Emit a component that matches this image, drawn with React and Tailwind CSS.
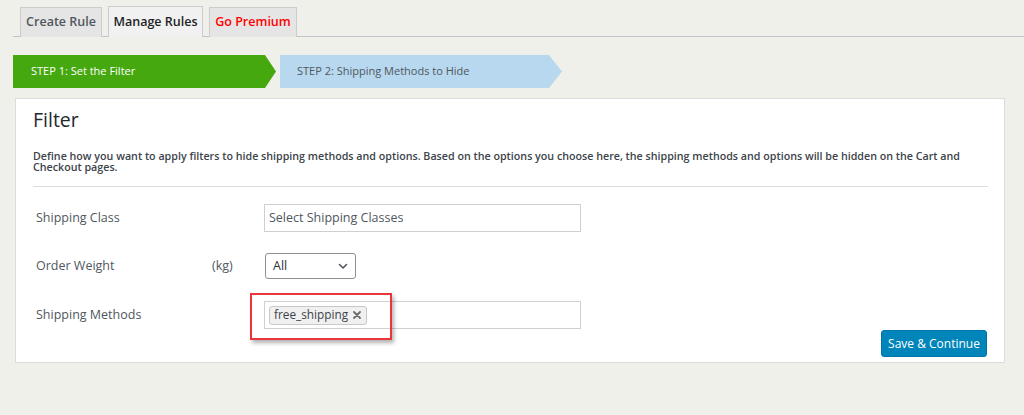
import React from "react";

function Chevron() {
  return (
    <svg width="12" height="12" viewBox="0 0 12 12" fill="none">
      <path d="M2.5 4.5L6 8L9.5 4.5" stroke="#50575e" strokeWidth="1.6" strokeLinecap="round" strokeLinejoin="round" />
    </svg>
  );
}

function Cross() {
  return (
    <svg width="8" height="8" viewBox="0 0 8 8" fill="none">
      <path d="M1 1L7 7M7 1L1 7" stroke="#6b6b6b" strokeWidth="1.8" strokeLinecap="round" />
    </svg>
  );
}

export default function App() {
  return (
    <div className="w-[1024px] h-[415px] bg-[#f0f0eb] overflow-hidden text-[#3c434a]" style={{ fontFamily: '"Open Sans", "Noto Sans", sans-serif' }}>
      {/* tabs */}
      <div className="pt-[6px] pl-[13px]">
        <div className="flex items-end gap-[6px] pl-[7px] border-b border-[#c3c4c7] h-[31px]">
          <div className="h-[30px] w-[82px] flex items-center justify-center bg-[#e5e5e5] border border-[#cccccc] border-b-0 text-[12.5px] font-semibold text-[#50575e] -mb-px">Create Rule</div>
          <div className="h-[31px] w-[95px] flex items-center justify-center bg-[#f1f1f1] border border-[#cccccc] border-b-0 text-[12.5px] font-semibold text-[#1d2327] -mb-px">Manage Rules</div>
          <div className="h-[30px] w-[88px] flex items-center justify-center bg-[#e5e5e5] border border-[#cccccc] border-b-0 text-[12.5px] font-semibold text-[#ff0000] -mb-px">Go Premium</div>
        </div>
      </div>

      {/* steps */}
      <div className="flex mt-[18px] ml-[13px] gap-[4px] h-[33px]">
        <div className="w-[263px] h-full bg-[#45a80e] text-white text-[11px] flex items-center pl-[18px] [clip-path:polygon(0_0,calc(100%-11px)_0,100%_50%,calc(100%-11px)_100%,0_100%)]">
          STEP 1: Set the Filter
        </div>
        <div className="w-[282px] h-full bg-[#b7d8ee] text-[#50575e] text-[11px] flex items-center pl-[17px] [clip-path:polygon(0_0,calc(100%-13px)_0,100%_50%,calc(100%-13px)_100%,0_100%)]">
          STEP 2: Shipping Methods to Hide
        </div>
      </div>

      {/* panel */}
      <div className="ml-[15px] mt-[10px] w-[990px] h-[265px] bg-white border border-[#dcdcde] px-[17px] pt-[6px]">
        <h2 className="text-[19.5px] text-[#23282d] leading-[30px] font-normal">Filter</h2>
        <p className="mt-[16px] text-[10.7px] leading-[11px] font-semibold text-[#3c434a] w-[960px]">
          Define how you want to apply filters to hide shipping methods and options. Based on the options you choose here, the shipping methods and options will be hidden on the Cart and Checkout pages.
        </p>
        <div className="mt-[13px] h-px bg-[#dcdcde] w-[955px]"></div>

        <div className="mt-[17px] flex items-center h-[28px]">
          <div className="w-[231px] pl-[3px] text-[12.5px] text-[#50575e]">Shipping Class</div>
          <div className="w-[317px] h-[28px] border border-[#d0d0d0] flex items-center pl-[4px] text-[12.5px] text-[#50575e]">Select Shipping Classes</div>
        </div>

        <div className="mt-[21px] flex items-center h-[26px]">
          <div className="w-[179px] pl-[3px] text-[12.5px] text-[#50575e]">Order Weight</div>
          <div className="w-[53px] text-[12.5px] text-[#50575e]">(kg)</div>
          <div className="w-[91px] h-[26px] border border-[#8c8f94] rounded-[3px] flex items-center justify-between pl-[7px] pr-[6px] text-[12.5px] text-[#2c3338]">
            <span>All</span>
            <Chevron />
          </div>
        </div>

        <div className="mt-[22px] flex items-center h-[28px]">
          <div className="w-[231px] pl-[3px] text-[12.5px] text-[#50575e]">Shipping Methods</div>
          <div className="relative w-[317px] h-[28px] border border-[#d0d0d0] flex items-center pl-[4px]">
            <div className="h-[19px] flex items-center gap-[5px] pl-[4px] pr-[5px] bg-[#f0f0f0] border border-[#c8c8c8] rounded-[3px] text-[11.8px] text-[#3c434a]">
              <span>free_shipping</span>
              <Cross />
            </div>
            <div className="absolute left-[-15px] top-[-9px] w-[142px] h-[47px] border-2 border-[#e8373a] shadow-[2px_3px_4px_rgba(0,0,0,0.3)]"></div>
          </div>
        </div>

        <div className="flex justify-end pr-[0px] mt-[1px]">
          <button className="w-[106px] h-[27px] bg-[#0085ba] border border-[#0073aa] rounded-[3px] text-white text-[12px]">Save &amp; Continue</button>
        </div>
      </div>
    </div>
  );
}
